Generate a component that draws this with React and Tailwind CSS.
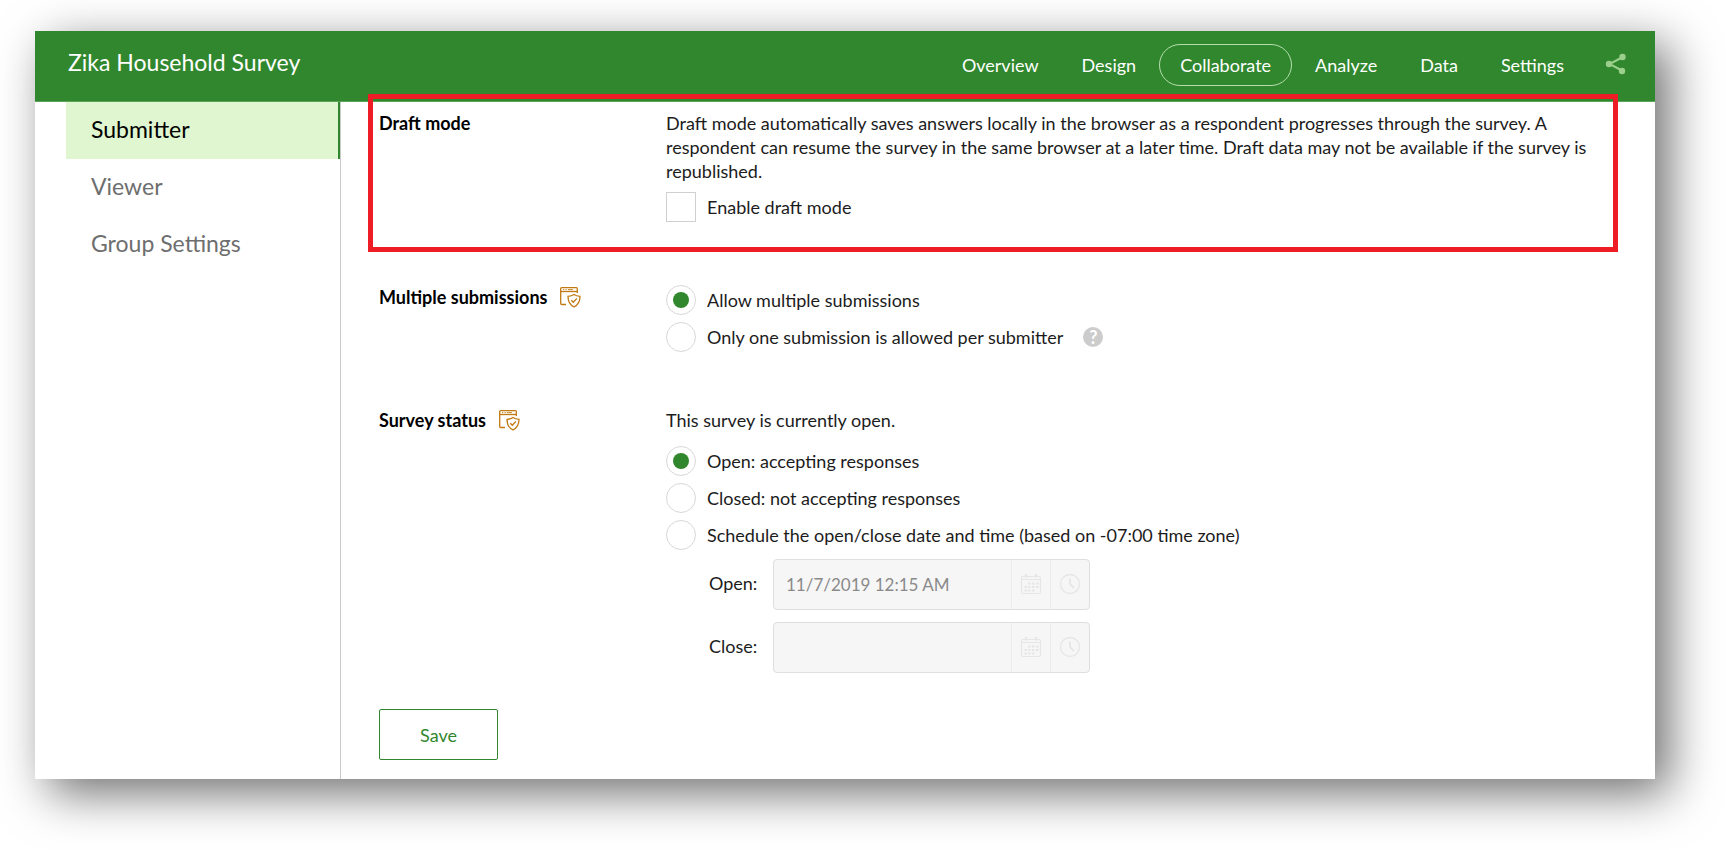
import { useState } from "react";

const tabs = ["Overview", "Design", "Collaborate", "Analyze", "Data", "Settings"];
const sections = ["Submitter", "Viewer", "Group Settings"];

function ShareIcon() {
  return (
    <svg viewBox="0 0 22 22" className="size-[22px]" fill="currentColor" stroke="currentColor">
      <path d="M17 4.5 4.5 11 17 17.5" fill="none" strokeWidth="2" />
      <circle cx="17.5" cy="4" r="3.2" stroke="none" />
      <circle cx="4" cy="11" r="3.2" stroke="none" />
      <circle cx="17" cy="18" r="3.2" stroke="none" />
    </svg>
  );
}

function PolicyIcon() {
  return (
    <svg viewBox="0 0 22 22" className="size-[22px] shrink-0" fill="none" stroke="#c17a12" strokeWidth="1.3">
      <path d="M7 18.5H2.7a1 1 0 0 1-1-1V2.6a1 1 0 0 1 1-1h14.6a1 1 0 0 1 1 1V7" />
      <path d="M1.7 5.5h16.6" />
      <path d="M4 3.6h1.3M6.5 3.6h1.3M9 3.6h5" strokeWidth="0.9" />
      <path d="M15 8.6c1.6 1.2 3.6 1.7 6 1.7 0 5.2-1.8 8.7-6 10.6-4.2-1.9-6-5.4-6-10.6 2.4 0 4.4-.5 6-1.7Z" />
      <path d="m12.3 14.3 2 2 3.6-3.9" />
    </svg>
  );
}

function CalendarIcon() {
  return (
    <svg viewBox="0 0 22 22" className="size-[22px]" fill="none" stroke="#e6e6e6" strokeWidth="1.2">
      <rect x="1.5" y="3.5" width="19" height="17" rx="1.5" />
      <path d="M1.5 6.5h19" />
      <path d="M6 1v3.500M16 1v3.500" strokeWidth="2.4" />
      <path d="M8 10.500h2.500M12 10.500h2.500M16 10.500h2.500M4.500 14h2.500M8 14h2.500M12 14h2.500M16 14h2.500M4.500 17.500h2.500M8 17.500h2.500M12 17.500h2.500" strokeWidth="2.2" />
    </svg>
  );
}

function ClockIcon() {
  return (
    <svg viewBox="0 0 22 22" className="size-[22px]" fill="none" stroke="#e6e6e6" strokeWidth="1.3">
      <circle cx="11" cy="11" r="9.5" />
      <path d="M11 5.500V11l4 4" strokeWidth="1.8" />
    </svg>
  );
}

function Option({ name, label, checked, onChange, children }) {
  return (
    <div className="flex items-center">
      <label className="flex items-center gap-[11px]">
        <input
          type="radio"
          name={name}
          checked={checked}
          onChange={onChange}
          className="appearance-none grid place-content-center size-[30px] shrink-0 rounded-full border border-[#d8d8d8] bg-white before:block before:size-4 before:rounded-full checked:before:bg-[#31872e]"
        />
        {label}
      </label>
      {children}
    </div>
  );
}

function DateField({ id, label, value }) {
  return (
    <div className="flex items-center">
      <label htmlFor={id} className="w-16 pb-1">{label}</label>
      <div className="flex h-[51px] w-[317px] rounded border border-[#dfdfdf] bg-[#f6f6f6] overflow-hidden">
        <input
          id={id}
          type="text"
          disabled
          defaultValue={value}
          className="min-w-0 flex-1 px-3 text-[17px] text-[#8a8a8a]"
        />
        <button type="button" disabled aria-label={`${label} date`} className="flex w-[39px] items-center justify-center border-l border-[#ececec] pb-[2px]">
          <CalendarIcon />
        </button>
        <button type="button" disabled aria-label={`${label} time`} className="flex w-[39px] items-center justify-center border-l border-[#ececec] pb-[2px]">
          <ClockIcon />
        </button>
      </div>
    </div>
  );
}

export default function App() {
  const [draft, setDraft] = useState(false);
  const [submissions, setSubmissions] = useState("multiple");
  const [status, setStatus] = useState("open");

  return (
    <div className="min-h-screen bg-white pt-[31px] pl-[35px] pr-[71px] pb-[71px] font-['Lato',sans-serif] text-[18px] leading-6 text-[#1c1c1c]">
      <div className="bg-white shadow-[14px_14px_45px_rgba(0,0,0,0.57)]">
        <header className="flex h-[71px] items-center justify-between border-b border-[#5aa357] bg-[#31872e] pl-[33px] pr-7 text-white">
          <h1 className="pb-2 text-[23px]">Zika Household Survey</h1>
          <nav className="flex items-center gap-[3px] pb-[2px]">
            {tabs.map((tab) => (
              <a
                key={tab}
                href="#"
                className={
                  tab === "Collaborate"
                    ? "rounded-full border border-[#b5deac] px-5 py-2"
                    : "px-5 py-2"
                }
              >
                {tab}
              </a>
            ))}
            <button type="button" aria-label="Share" className="ml-[18px] pb-[2px] text-[#9bd08c]">
              <ShareIcon />
            </button>
          </nav>
        </header>

        <div className="flex">
          <aside className="w-[306px] shrink-0 border-r border-[#cacaca] pl-[31px]">
            <nav className="flex flex-col text-[23px]">
              {sections.map((item) => (
                <a
                  key={item}
                  href="#"
                  className={
                    item === "Submitter"
                      ? "flex h-[57px] items-center border-r-2 border-[#31872e] bg-[#dff6d0] pb-1 pl-[25px] text-black"
                      : "flex h-[57px] items-center pb-1 pl-[25px] text-[#6e6e6e]"
                  }
                >
                  {item}
                </a>
              ))}
            </nav>
          </aside>

          <main className="min-w-0 flex-1 pl-[27px] pr-[37px] pb-[19px]">
            <section className="relative -mt-2 grid h-[158px] grid-cols-[287px_1fr] border-5 border-[#ee1c25] pl-[6px] pr-5 pt-3">
              <h2 className="font-bold text-black">Draft mode</h2>
              <div>
                <p>
                  Draft mode automatically saves answers locally in the browser as a respondent progresses through the survey. A
                  respondent can resume the survey in the same browser at a later time. Draft data may not be available if the survey is
                  republished.
                </p>
                <label className="mt-[9px] flex items-center gap-[11px]">
                  <input
                    type="checkbox"
                    checked={draft}
                    onChange={(e) => setDraft(e.target.checked)}
                    className="appearance-none size-[30px] border border-[#d0d0d0] bg-white checked:bg-[#31872e]"
                  />
                  Enable draft mode
                </label>
              </div>
            </section>

            <section className="mt-[33px] grid grid-cols-[287px_1fr] pl-[11px]">
              <h2 className="flex items-center gap-3 self-start font-bold text-black">
                Multiple submissions <PolicyIcon />
              </h2>
              <div className="flex flex-col gap-[7px]">
                <Option
                  name="submissions"
                  label="Allow multiple submissions"
                  checked={submissions === "multiple"}
                  onChange={() => setSubmissions("multiple")}
                />
                <Option
                  name="submissions"
                  label="Only one submission is allowed per submitter"
                  checked={submissions === "one"}
                  onChange={() => setSubmissions("one")}
                >
                  <button type="button" aria-label="Help" className="ml-5 size-5 rounded-full bg-[#cccccc] text-[18px] leading-5 font-bold text-white">
                    ?
                  </button>
                </Option>
              </div>
            </section>

            <section className="mt-[56px] grid grid-cols-[287px_1fr] pl-[11px]">
              <h2 className="flex items-center gap-3 self-start font-bold text-black">
                Survey status <PolicyIcon />
              </h2>
              <div>
                <p>This survey is currently open.</p>
                <div className="mt-[14px] flex flex-col gap-[7px]">
                  <Option
                    name="status"
                    label="Open: accepting responses"
                    checked={status === "open"}
                    onChange={() => setStatus("open")}
                  />
                  <Option
                    name="status"
                    label="Closed: not accepting responses"
                    checked={status === "closed"}
                    onChange={() => setStatus("closed")}
                  />
                  <Option
                    name="status"
                    label="Schedule the open/close date and time (based on -07:00 time zone)"
                    checked={status === "schedule"}
                    onChange={() => setStatus("schedule")}
                  />
                </div>
                <div className="mt-[9px] flex flex-col gap-3 pl-[43px]">
                  <DateField id="open-date" label="Open:" value="11/7/2019 12:15 AM" />
                  <DateField id="close-date" label="Close:" value="" />
                </div>
              </div>
            </section>

            <button type="button" className="mt-9 ml-[11px] h-[51px] w-[119px] rounded-xs border border-[#31872e] text-[#31872e]">
              Save
            </button>
          </main>
        </div>
      </div>
    </div>
  );
}
